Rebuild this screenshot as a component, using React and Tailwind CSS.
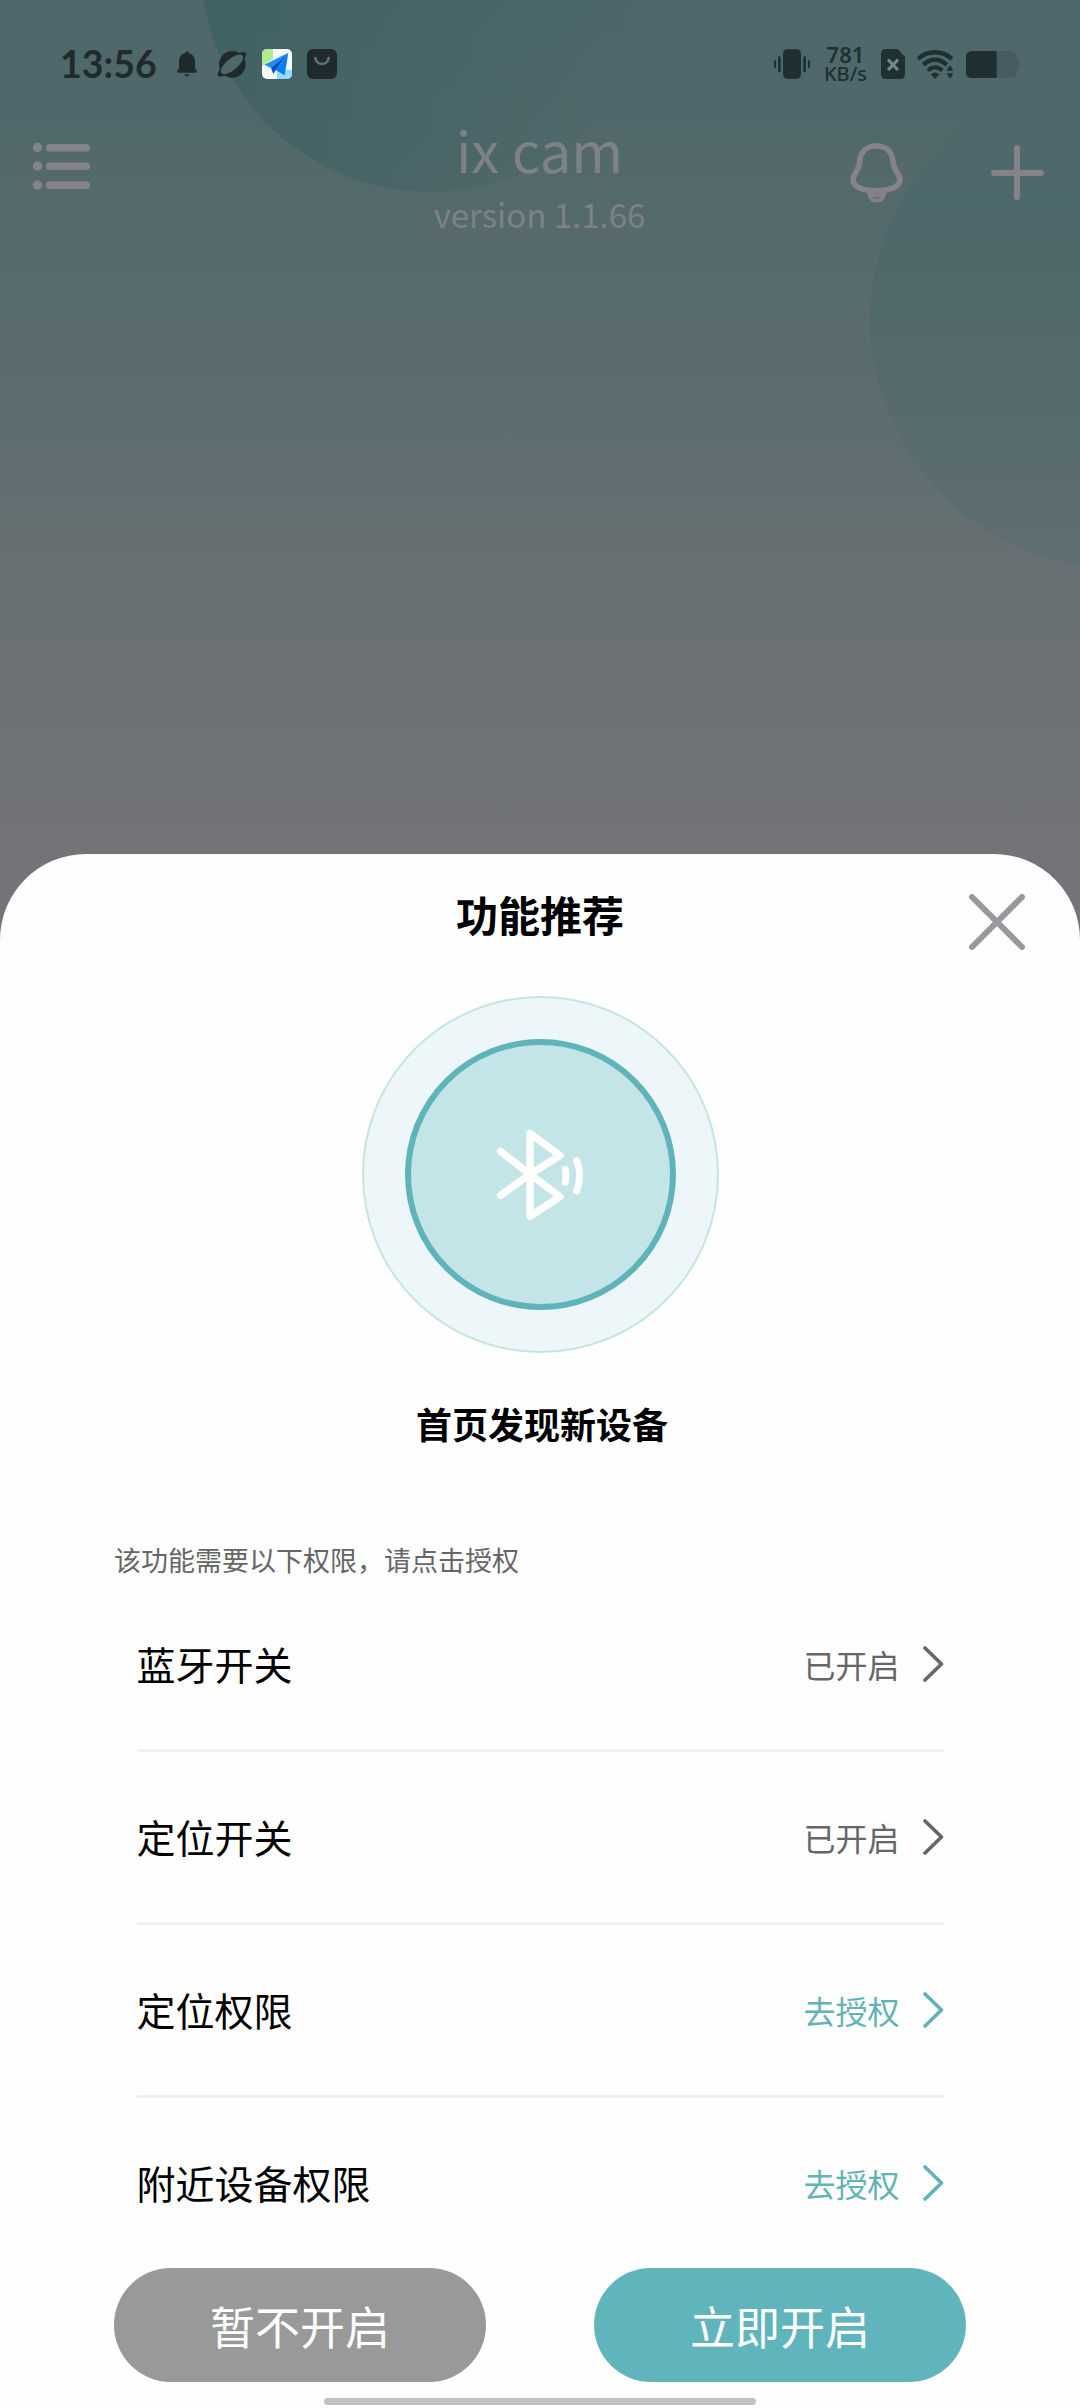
import React, { useState } from "react";

const permissions = [
  { id: "bluetooth", label: "蓝牙开关", granted: true },
  { id: "location", label: "定位开关", granted: true },
  { id: "locationAuth", label: "定位权限", granted: false },
  { id: "nearby", label: "附近设备权限", granted: false },
];

// Status bar icons
const BellSolid = () => (
  <svg className="ml-[19px] h-[26px] w-5" viewBox="0 0 60 78" fill="#1e2a2c">
    <path d="M30 1c4 0 6 3 6 6 13 4 18 13 18 24v20c0 5 6 6 6 10 0 3-1 4-4 4H4c-3 0-4-1-4-4 0-4 6-5 6-10V31C6 20 11 11 24 7c0-3 2-6 6-6z" />
    <path d="M22 70h16c-1 4-4 6-8 6s-7-2-8-6z" />
  </svg>
);

const PlanetIcon = () => (
  <svg className="ml-5 h-[30px] w-[30px]" viewBox="0 0 90 90">
    <circle cx="46" cy="46" r="40" fill="#1e2a2c" />
    <ellipse cx="45" cy="46" rx="54" ry="17" transform="rotate(-40 45 46)" fill="#1e2a2c" />
    <ellipse cx="45" cy="46" rx="41" ry="17" transform="rotate(-40 45 46)" fill="#4e686b" />
  </svg>
);

const MapIcon = () => (
  <svg className="ml-[15px] h-[30px] w-[30px] rounded-[5px]" viewBox="0 0 90 90">
    <rect width="90" height="90" fill="#f4fafc" />
    <path d="M0 0h33v30L0 52z" fill="#b4ea92" />
    <path d="M45 62h45v28H45z" fill="#8fdcff" />
    <path d="M79 11L7 47l20 10z" fill="#1c8dfb" />
    <path d="M79 11L27 57l7 18 8-13z" fill="#0752c4" />
    <path d="M79 11L41 63l27 16z" fill="#0b7df2" />
  </svg>
);

const BagIcon = () => (
  <svg className="ml-[15px] h-[30px] w-[30px]" viewBox="0 0 90 90">
    <rect width="90" height="90" rx="18" fill="#1e2a2c" />
    <path d="M25 27c4 24 36 24 40 0" fill="none" stroke="#5f7476" strokeWidth="8" strokeLinecap="round" />
  </svg>
);

const VibrateIcon = () => (
  <svg className="h-[30px] w-9" viewBox="0 0 108 90" fill="#1e3032">
    <rect x="27" width="54" height="90" rx="14" />
    <rect x="0" y="34" width="6" height="23" rx="2" />
    <rect x="12" y="22" width="8" height="48" rx="3" />
    <rect x="88" y="22" width="8" height="48" rx="3" />
    <rect x="102" y="34" width="6" height="23" rx="2" />
  </svg>
);

const SimIcon = () => (
  <svg className="ml-[13px] h-[30px] w-6" viewBox="0 0 72 90">
    <path d="M14 0h36l22 24v52q0 14-14 14H14Q0 90 0 76V14Q0 0 14 0z" fill="#1e3032" />
    <path d="M21 32l30 31M51 32L21 63" stroke="#768a8c" strokeWidth="9" />
  </svg>
);

const WifiIcon = () => (
  <svg className="ml-3 h-[30px] w-9" viewBox="0 0 108 90" fill="none" stroke="#1e3032" strokeWidth="13">
    <path d="M3 30C31 3 77 3 105 30" />
    <path d="M19 48C39 27 69 27 89 48" />
    <path d="M33 65C45 51 63 51 75 65" strokeWidth="12" />
    <path d="M41 76q13-11 26 0L54 90z" fill="#1e3032" stroke="none" />
    <path d="M99 48l10 17H89zM99 90l10-17H89z" fill="#1e3032" stroke="none" />
  </svg>
);

const BatteryIcon = () => (
  <svg className="ml-[13px] h-[27px] w-[54px]" viewBox="0 0 162 81">
    <path d="M92 0h42q18 0 18 18 9 14 9 22t-9 23q0 18-18 18H92z" fill="#485b60" />
    <path d="M18 0h74v81H18Q0 81 0 63V18Q0 0 18 0z" fill="#1e2e31" />
  </svg>
);

// Bluetooth mark with two signal waves
const BluetoothIcon = () => (
  <svg className="h-24 w-24" viewBox="458 440 288 288" fill="none" stroke="#fff" strokeLinecap="round" strokeLinejoin="round">
    <path d="M484 513L572 582L484 645M572 582L662 525L572 459V708L662 649L572 582" strokeWidth="22" />
    <path d="M678 567q4 18 0 39M712 541q18 44 0 91" strokeWidth="21" />
  </svg>
);

const Chevron = () => (
  <svg className="ml-[23px] h-9 w-[21px]" viewBox="0 0 21 36" fill="none" stroke="currentColor" strokeWidth="3.6" strokeLinecap="round" strokeLinejoin="round">
    <path d="M2 2L18.5 18L2 34" />
  </svg>
);

const StatusBar = () => (
  <div className="flex h-[111px] items-center justify-between pt-[17px] pr-[60px] pl-[60px] text-[#1e2a2c]">
    <div className="flex items-center">
      <span className="w-[98px] font-['Lato',sans-serif] text-[37.5px] leading-10 font-bold whitespace-nowrap">13:56</span>
      <BellSolid />
      <PlanetIcon />
      <MapIcon />
      <BagIcon />
    </div>
    <div className="flex items-center text-[#1e3032]">
      <VibrateIcon />
      <div className="ml-[13px] flex w-[45px] flex-col items-center font-['Noto_Sans',sans-serif] whitespace-nowrap">
        <span className="text-[22px] leading-[20px] font-semibold">781</span>
        <span className="text-[20px] leading-[20px] font-medium">KB/s</span>
      </div>
      <SimIcon />
      <WifiIcon />
      <BatteryIcon />
    </div>
  </div>
);

const Header = () => (
  <header className="flex justify-between pr-9 pl-[33px] text-[#858387]">
    <div className="w-[300px] pt-[31px]">
      <svg className="h-12 w-[57px]" viewBox="0 0 57 48" fill="currentColor">
        <circle cx="4.5" cy="5.5" r="4.7" />
        <circle cx="4.5" cy="24" r="4.7" />
        <circle cx="4.5" cy="43" r="4.7" />
        <rect x="13" y="2" width="44" height="7.5" rx="3.5" />
        <rect x="13" y="20.5" width="44" height="7.5" rx="3.5" />
        <rect x="13" y="39.5" width="44" height="7.5" rx="3.5" />
      </svg>
    </div>
    <div className="pt-0.5 pl-0.5 text-center text-[#7e8285]">
      <h1 className="text-[56px] leading-[72px]">ix cam</h1>
      <p className="mt-[7px] text-[33px] leading-[44px]">version 1.1.66</p>
    </div>
    <div className="flex w-[300px] justify-end">
      <svg className="mt-8 h-[60px] w-[53px]" viewBox="0 0 159 180" fill="none" stroke="currentColor" strokeWidth="17">
        <path d="M79 9C49 9 31 27 29 56C28 81 8 96 9 110C11 135 45 143 79 143S148 135 150 110C151 96 131 81 129 56C127 27 109 9 79 9z" />
        <path d="M58 154q4 19 22 19t22-19q-22 8-44 0z" strokeWidth="11" />
      </svg>
      <svg className="mt-[34px] ml-[88px] h-[55px] w-[53px]" viewBox="0 0 53 55" fill="none" stroke="currentColor" strokeWidth="6" strokeLinecap="round">
        <path d="M3 28H50M26 3V52" />
      </svg>
    </div>
  </header>
);

const PermissionRow = ({ item, last }) => (
  <li className={`flex items-center justify-between ${last ? "h-[170px]" : "h-[173px] border-b-[3px] border-[#f1f1f1]"}`}>
    <span className="pb-0.5 text-[39px] leading-[50px] text-black">{item.label}</span>
    <button className={`flex items-center text-[32px] leading-10 ${item.granted ? "text-[#666666]" : "text-[#62b3b5]"}`}>
      {item.granted ? "已开启" : "去授权"}
      <Chevron />
    </button>
  </li>
);

export default function App() {
  const [items] = useState(permissions);

  return (
    <div className="relative h-[2408px] w-[1080px] overflow-hidden bg-[linear-gradient(180deg,#4d676a_0px,#52696c_150px,#5e6d71_430px,#677072_560px,#737478_850px)] bg-[#737478] font-['Noto_Sans_CJK_SC',sans-serif]">
      {/* Background bubbles */}
      <div className="absolute top-[-269px] left-[200px] h-[461px] w-[461px] rounded-full bg-linear-to-r from-[#3f6061]/80 to-[#4d676a]/0" />
      <div className="absolute top-[72px] left-[870px] h-[496px] w-[496px] rounded-full bg-[linear-gradient(180deg,#4d686b00_0%,#4d686b_25%,#52696b_50%,#596c6f_75%,#5f6e73_100%)]" />

      <div className="relative flex h-full flex-col">
        <div className="h-[854px]">
          <StatusBar />
          <Header />
        </div>

        <section className="flex flex-1 flex-col items-center rounded-t-[86px] bg-[#fefefe]">
          <div className="relative mt-7 w-full text-center">
            <h2 className="text-[42px] leading-[64px] font-bold text-black">功能推荐</h2>
            <button className="absolute top-3 right-[55px]">
              <svg className="h-14 w-14" viewBox="0 0 56 56" fill="none" stroke="#98999c" strokeWidth="6" strokeLinecap="round">
                <path d="M3 3L53 53M53 3L3 53" />
              </svg>
            </button>
          </div>

          <div className="mt-[50px] flex h-[357px] w-[357px] items-center justify-center rounded-full border-2 border-[#c6e5df] bg-[#edf7f9]">
            <div className="flex h-[271px] w-[271px] items-center justify-center rounded-full border-[6px] border-[#5fb4b9] bg-[#c3e5e7]">
              <BluetoothIcon />
            </div>
          </div>

          <h3 className="mt-[45px] pl-1 text-[36px] leading-[50px] font-bold text-black">首页发现新设备</h3>

          <p className="mt-[92px] mb-[-1px] w-full pl-[114px] text-[27px] leading-10 text-[#666666]">该功能需要以下权限，请点击授权</p>

          <ul className="w-[807px]">
            {items.map((item, i) => (
              <PermissionRow key={item.id} item={item} last={i === items.length - 1} />
            ))}
          </ul>

          <div className="flex gap-[108px] text-[45px] leading-[64px] text-white">
            <button className="h-[114px] w-[372px] rounded-full bg-[#999999] pt-0.5">暂不开启</button>
            <button className="h-[114px] w-[372px] rounded-full bg-[#60b5bc] pt-0.5">立即开启</button>
          </div>

          <div className="mt-4 h-[7px] w-[432px] rounded-full bg-[#c2c2c2]" />
        </section>
      </div>
    </div>
  );
}
